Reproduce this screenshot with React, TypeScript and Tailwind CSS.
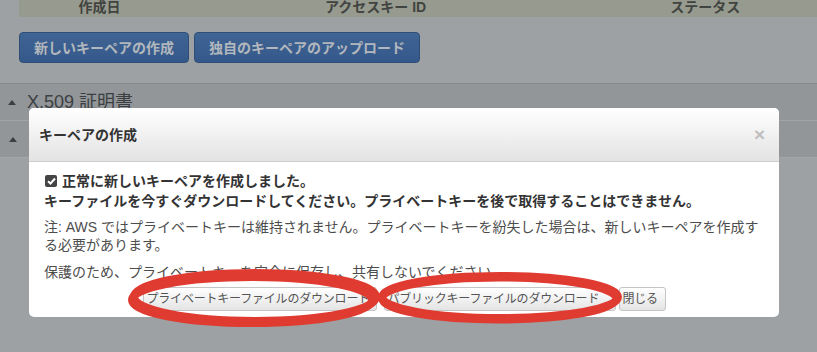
import React from "react";

const FONT = { fontFamily: '"Liberation Sans", "Noto Sans CJK JP", sans-serif' };

function TopButton({ children }: { children: React.ReactNode }) {
  return (
    <button className="h-[31px] px-[14px] rounded-[4px] border border-[#2e4d77] bg-gradient-to-b from-[#3f6594] to-[#35588a] text-[14px] font-bold leading-[20px] text-[#b2b7bd] whitespace-nowrap">
      {children}
    </button>
  );
}

function ModalButton({ children, w }: { children: React.ReactNode; w: string }) {
  return (
    <button
      className={`${w} h-[24px] px-[3px] rounded-[3px] border border-[#c4c4c4] bg-gradient-to-b from-white to-[#e4e4e4] text-[12px] leading-[22px] tracking-[-0.2px] text-[#555] whitespace-nowrap overflow-hidden flex justify-start`}
    >
      {children}
    </button>
  );
}

function Tri() {
  return (
    <svg width="8" height="5" viewBox="0 0 8 5">
      <path d="M0 5 L4 0 L8 5 Z" fill="#3c3f42" />
    </svg>
  );
}

export default function App() {
  return (
    <div className="relative w-[817px] h-[352px] overflow-hidden bg-[#9da1a4]" style={FONT}>
      {/* underlying page (dimmed) */}
      <div className="pl-[19px]">
        <div className="flex h-[17px] w-[820px] bg-[#979b8f] text-[14px] font-bold leading-[14px] text-[#414340]">
          <div className="w-[161px] text-center">作成日</div>
          <div className="w-[392px] text-center">アクセスキー ID</div>
          <div className="w-[268px] text-center">ステータス</div>
        </div>
        <div className="flex gap-[5px] pt-[15px] pb-[20px]">
          <TopButton>新しいキーペアの作成</TopButton>
          <TopButton>独自のキーペアのアップロード</TopButton>
        </div>
      </div>
      <div className="border-t border-[#878b8e]">
        <div className="flex items-center h-[36px] bg-[#929699] text-[#3c3f42]">
          <span className="ml-[8px] mr-[11px] flex"><Tri /></span>
          <span className="text-[18px] leading-[22px]">X.509 証明書</span>
        </div>
        <div className="flex items-center h-[37px] border-t border-[#a0a4a7] bg-[#929699] text-[#3c3f42]">
          <span className="ml-[9px] flex"><Tri /></span>
        </div>
        <div className="border-t border-[#a3a7aa]" />
      </div>

      {/* modal */}
      <div className="absolute left-[29px] top-[108px] w-[750px] h-[209px] rounded-[5px] bg-white overflow-hidden">
        <div className="flex items-center justify-between h-[54px] pl-[10px] pr-[14px] bg-gradient-to-b from-white to-[#e3e3e3] border-b border-[#cdcdcd]">
          <span className="text-[14px] font-bold leading-[20px] text-[#333]">キーペアの作成</span>
          <span className="text-[19px] font-bold leading-none text-[#bfbfbf]">×</span>
        </div>
        <div className="px-[15px] pt-[9px]">
          <div className="flex items-center text-[14px] font-bold leading-[20px] text-[#333]">
            <span className="ml-[1px] mr-[5px] flex items-center justify-center w-[12px] h-[12px] rounded-[2px] bg-[#454545]">
              <svg width="9" height="8" viewBox="0 0 9 8">
                <path d="M1 4.2 L3.5 6.5 L8 1.5" stroke="white" strokeWidth="2" fill="none" />
              </svg>
            </span>
            正常に新しいキーペアを作成しました。
          </div>
          <div className="text-[14px] font-bold leading-[20px] text-[#333] whitespace-nowrap">
            キーファイルを今すぐダウンロードしてください。プライベートキーを後で取得することはできません。
          </div>
          <div className="mt-[7px] text-[14px] leading-[18px] text-[#4d4d4d] whitespace-nowrap">
            注: AWS ではプライベートキーは維持されません。プライベートキーを紛失した場合は、新しいキーペアを作成す
            <br />
            る必要があります。
          </div>
          <div className="mt-[9px] text-[14px] leading-[18px] text-[#4d4d4d] whitespace-nowrap">
            保護のため、プライベートキーを安全に保存し、共有しないでください。
          </div>
          <div className="mt-[6px] flex justify-center">
            <ModalButton w="w-[234px]">プライベートキーファイルのダウンロード</ModalButton>
            <div className="ml-[7px]">
              <ModalButton w="w-[232px]">パブリックキーファイルのダウンロード</ModalButton>
            </div>
            <div className="ml-[3px]">
              <ModalButton w="w-[47px]">閉じる</ModalButton>
            </div>
          </div>
        </div>
      </div>

      {/* red annotation ellipses */}
      <svg className="absolute inset-0 pointer-events-none" width="817" height="352" viewBox="0 0 817 352">
        <ellipse cx="255" cy="297" rx="121" ry="24" fill="none" stroke="#e03b31" strokeWidth="8" />
        <ellipse cx="252" cy="300" rx="120" ry="23" fill="none" stroke="#e03b31" strokeWidth="8" />
        <ellipse cx="500" cy="297" rx="118" ry="21" fill="none" stroke="#e03b31" strokeWidth="8" />
        <ellipse cx="499" cy="299" rx="117" ry="21" fill="none" stroke="#e03b31" strokeWidth="7" />
      </svg>
    </div>
  );
}
